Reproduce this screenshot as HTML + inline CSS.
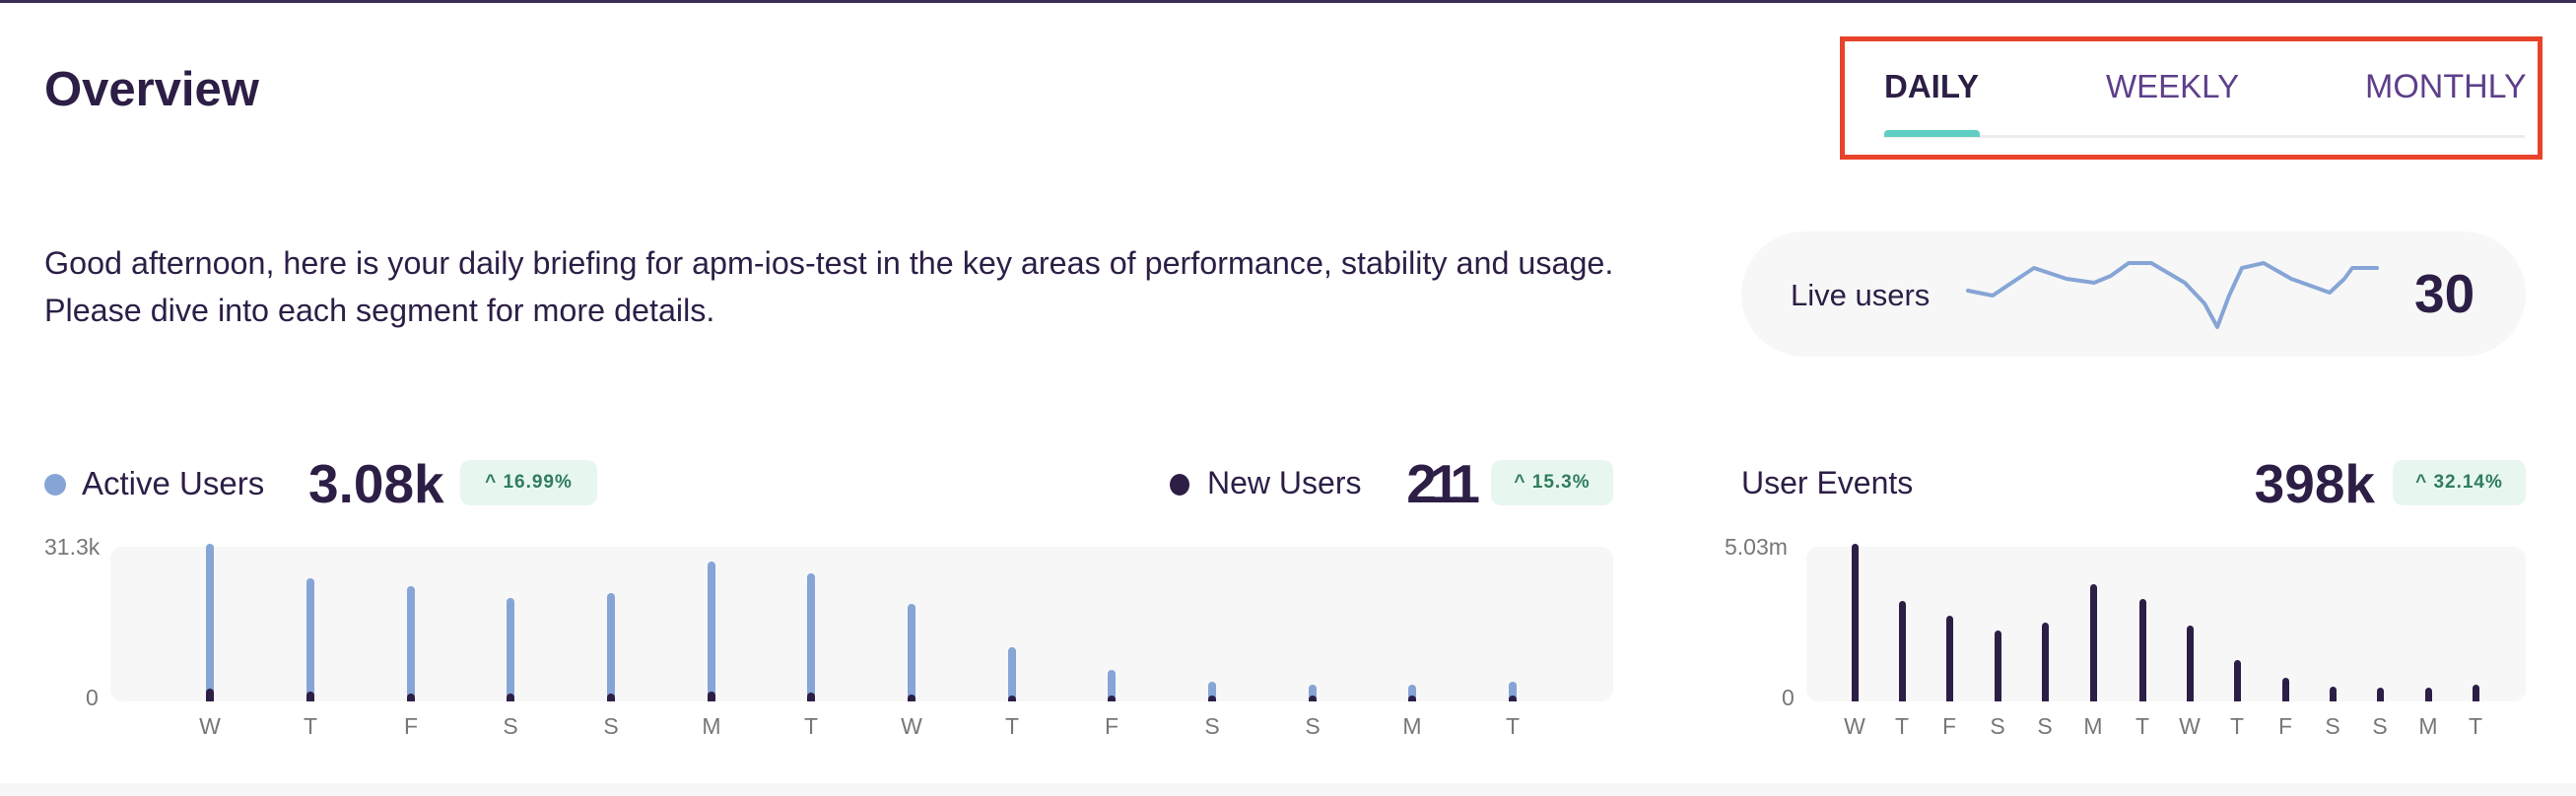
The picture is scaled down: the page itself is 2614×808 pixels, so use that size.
<!DOCTYPE html>
<html><head><meta charset="utf-8"><style>
*{margin:0;padding:0;box-sizing:border-box}
body{width:2614px;height:808px;background:#fff;position:relative;overflow:hidden;font-family:"Liberation Sans",sans-serif;color:#2d1e46}
.a{position:absolute;white-space:nowrap}
.badge{position:absolute;background:#e8f6f0;border-radius:10px;color:#2e7d5b;font-weight:bold;font-size:19px;display:flex;align-items:center;justify-content:center;letter-spacing:1px}
.lbl{position:absolute;font-size:23px;color:#777;transform:translateX(-50%)}
.bar{position:absolute;border-radius:4px 4px 0 0}
</style></head><body>
<div class="a" style="left:0;top:0;width:2614px;height:3px;background:#3d2d55"></div>
<div class="a" style="left:45px;top:63px;font-size:49px;font-weight:bold">Overview</div>
<div class="a" style="left:45px;top:243px;font-size:32.3px;line-height:48px">Good afternoon, here is your daily briefing for apm-ios-test in the key areas of performance, stability and usage.<br>Please dive into each segment for more details.</div>

<div class="a" style="left:1867px;top:37px;width:713px;height:125px;border:5px solid #e8432a"></div>
<div class="a" style="left:1912px;top:69px;font-size:33px;font-weight:bold">DAILY</div>
<div class="a" style="left:2137px;top:69px;font-size:33px;color:#5e3f8a">WEEKLY</div>
<div class="a" style="left:2400px;top:69px;font-size:34px;color:#5e3f8a">MONTHLY</div>
<div class="a" style="left:1912px;top:137px;width:650px;height:3px;background:#ececec"></div>
<div class="a" style="left:1912px;top:132px;width:97px;height:7px;background:#5fcfc4;border-radius:4px 4px 0 0"></div>

<div class="a" style="left:1767px;top:235px;width:796px;height:127px;background:#f7f7f7;border-radius:64px"></div>
<div class="a" style="left:1817px;top:282px;font-size:31px">Live users</div>
<svg class="a" style="left:0;top:0" width="2614" height="808"><polyline fill="none" stroke="#86a5d6" stroke-width="4" stroke-linejoin="round" stroke-linecap="round" points="1997,295 2022,300 2064,272 2097,283 2125,287 2142,280 2160,267 2183,267 2217,287 2237,308 2250,332 2262,300 2275,272 2297,267 2325,283 2364,297 2379,283 2387,272 2412,272"/></svg>
<div class="a" style="left:2450px;top:266px;font-size:55px;font-weight:bold">30</div>

<div class="a" style="left:45px;top:481px;width:22px;height:22px;border-radius:50%;background:#86a5d6"></div>
<div class="a" style="left:83px;top:472px;font-size:33px">Active Users</div>
<div class="a" style="left:313px;top:459px;font-size:55px;font-weight:bold">3.08k</div>
<div class="badge" style="left:467px;top:467px;width:139px;height:46px">^ 16.99%</div>
<div class="a" style="left:1187px;top:481px;width:20px;height:22px;border-radius:50%;background:#2d1e46"></div>
<div class="a" style="left:1225px;top:472px;font-size:32px">New Users</div>
<div class="a" style="right:1119px;top:459px;font-size:55px;font-weight:bold;letter-spacing:-7px">211</div>
<div class="badge" style="left:1513px;top:467px;width:124px;height:46px">^ 15.3%</div>
<div class="a" style="left:1767px;top:472px;font-size:32px">User Events</div>
<div class="a" style="right:204px;top:459px;font-size:55px;font-weight:bold">398k</div>
<div class="badge" style="left:2428px;top:467px;width:135px;height:46px">^ 32.14%</div>

<div class="a" style="left:112px;top:555px;width:1525px;height:157px;background:#f7f7f7;border-radius:12px"></div>
<div class="a" style="left:45px;top:542px;font-size:23px;color:#777">31.3k</div>
<div class="a" style="left:87px;top:695px;font-size:23px;color:#777">0</div>
<div class="a" style="left:1833px;top:555px;width:730px;height:157px;background:#f7f7f7;border-radius:12px"></div>
<div class="a" style="left:1750px;top:542px;font-size:23px;color:#777">5.03m</div>
<div class="a" style="left:1808px;top:695px;font-size:23px;color:#777">0</div>

<div id="c"></div>
<script>
var x1=[213,315,417,518,620,722,823,925,1027,1128,1230,1332,1433,1535],t1=[552,587,595,607,602,570,582,613,657,680,692,695,695,692],d1=[13,10,8,8,8,10,9,7,6,6,6,6,6,6];
var x2=[1882,1930,1978,2027,2075,2124,2174,2222,2270,2319,2367,2415,2464,2512],t2=[552,610,625,640,632,593,608,635,670,688,697,698,698,695];
var L="WTFSSMTWTFSSMT",h="";
for(var i=0;i<14;i++){
h+='<div class="bar" style="left:'+(x1[i]-4)+'px;top:'+t1[i]+'px;width:8px;height:'+(712-t1[i])+'px;background:#86a5d6"></div>';
h+='<div class="bar" style="left:'+(x1[i]-4)+'px;top:'+(712-d1[i])+'px;width:8px;height:'+d1[i]+'px;background:#2d1e46"></div>';
h+='<div class="lbl" style="left:'+x1[i]+'px;top:724px">'+L[i]+'</div>';
h+='<div class="bar" style="left:'+(x2[i]-3)+'px;top:'+t2[i]+'px;width:7px;height:'+(712-t2[i])+'px;background:#2d1e46"></div>';
h+='<div class="lbl" style="left:'+x2[i]+'px;top:724px">'+L[i]+'</div>';}
document.getElementById('c').innerHTML=h;
</script>
<div class="a" style="left:0;top:795px;width:2614px;height:13px;background:#f7f7f7"></div>
</body></html>
